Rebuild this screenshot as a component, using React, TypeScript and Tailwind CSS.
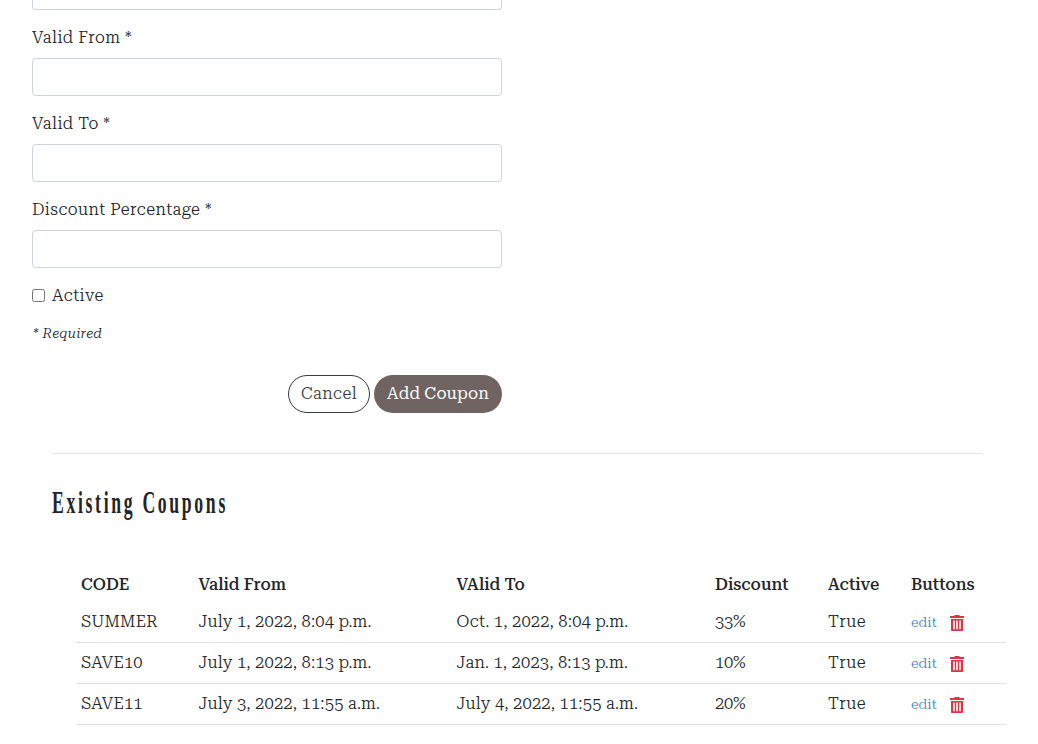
import type { ReactNode } from "react";

const coupons = [
  { code: "SUMMER", from: "July 1, 2022, 8:04 p.m.", to: "Oct. 1, 2022, 8:04 p.m.", discount: "33%" },
  { code: "SAVE10", from: "July 1, 2022, 8:13 p.m.", to: "Jan. 1, 2023, 8:13 p.m.", discount: "10%" },
  { code: "SAVE11", from: "July 3, 2022, 11:55 a.m.", to: "July 4, 2022, 11:55 a.m.", discount: "20%" },
];

const columns = "grid grid-cols-[117.5px_258px_258.5px_113px_83px_100px] pl-[5px]";

function Field({ label }: { label: ReactNode }) {
  return (
    <label className="mb-4 block">
      <span className="mb-2 block h-6">{label}</span>
      <input className="block h-[38px] w-full rounded border border-[#ced4da] bg-white px-3 outline-none" />
    </label>
  );
}

function TrashIcon() {
  return (
    <svg width="14" height="16" viewBox="0 0 14 16" fill="#dc3545" aria-hidden="true">
      <path d="M4.5 0h5v1H14v2H0V1h4.5z" />
      <path fillRule="evenodd" d="M1 4h12v11.2q0 .8-.8.8H1.800q-.8 0-.8-.8zM3.200 5.500v8.800h1.600V5.500zm3 0v8.800h1.600V5.500zm3 0v8.800h1.600V5.500z" />
    </svg>
  );
}

export default function App() {
  return (
    <main className="h-[744px] overflow-hidden bg-white font-['Roboto_Serif','DejaVu_Serif',serif] text-[16.5px] font-light leading-6 text-[#212529]">
      <form className="ml-8 w-[470px] tracking-[0.4px]" onSubmit={(e) => e.preventDefault()}>
        <div className="mb-4 h-[10px] rounded-b border border-t-0 border-[#ced4da]" />
        <Field label="Valid From *" />
        <Field label="Valid To *" />
        <Field label="Discount Percentage *" />
        <label className="mb-4 flex h-6 items-center">
          <input type="checkbox" className="mr-[7px] mb-px size-[13px] appearance-none rounded-[2.5px] border border-[#767676] bg-white" />
          Active
        </label>
        <p className="h-[21px] pl-px text-[14px] italic leading-[19px] tracking-[0.25px]">* Required</p>
        <div className="mt-[30px] flex justify-end gap-1">
          <button type="button" className="h-[38px] w-[82px] rounded-full border border-[#343a40] text-[#343a40]">Cancel</button>
          <button type="submit" className="h-[38px] w-32 rounded-full bg-[#6f6461] font-normal tracking-[0.1px] text-white">Add Coupon</button>
        </div>
      </form>
      <section className="mt-10 ml-[52px]">
        <hr className="w-[930px] border-[#e4e5e5]" />
        <h2 className="mt-[31px] h-9 origin-left scale-x-[0.57] whitespace-nowrap font-['Liberation_Serif'] text-[31px] font-bold leading-9 tracking-[4.7px]">Existing Coupons</h2>
      </section>
      <div className="mt-[43px] ml-[76px] w-[930px]">
        <div className={`${columns} h-[38px] items-center pt-[3px] font-medium`}>
          <span>CODE</span>
          <span>Valid From</span>
          <span>VAlid To</span>
          <span>Discount</span>
          <span>Active</span>
          <span>Buttons</span>
        </div>
        {coupons.map((c) => (
          <div key={c.code} className={`${columns} h-[41px] items-center border-b border-[#dee2e6] pb-px tracking-[0.17px]`}>
            <span>{c.code}</span>
            <span>{c.from}</span>
            <span>{c.to}</span>
            <span className="tracking-[-0.3px]">{c.discount}</span>
            <span className="tracking-[0.5px]">True</span>
            <span className="flex items-center">
              <a href="#" className="w-[39px] text-sm tracking-normal text-[#3a84ba]">edit</a>
              <button type="button" aria-label="Delete" className="mt-0.5">
                <TrashIcon />
              </button>
            </span>
          </div>
        ))}
      </div>
    </main>
  );
}
